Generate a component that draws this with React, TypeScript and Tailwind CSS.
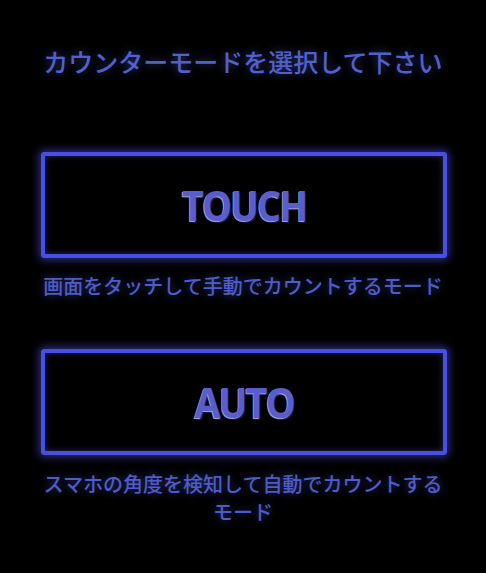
import React from "react";

const jp = "font-['Noto_Sans_CJK_JP','Noto_Sans',sans-serif]";

function ModeBox({ label }: { label: string }) {
  return (
    <div className="ml-[41px] flex h-[106px] w-[406px] items-center justify-center rounded-[3px] border-[4px] border-[#4a4fe4] shadow-[0_0_9px_2px_rgba(80,86,240,0.55),inset_0_0_6px_rgba(80,86,240,0.45)]">
      <span className="scale-x-[0.9] font-['Open_Sans',sans-serif] text-[42px] font-bold leading-none tracking-[-2px] text-[#5a5dcc] [text-shadow:-1px_1px_0_#9a9cc8,1px_2px_1px_#1a1a50]">
        {label}
      </span>
    </div>
  );
}

export default function App() {
  return (
    <div className={`min-h-[573px] w-[486px] bg-black ${jp}`}>
      <div className="pt-[45px] text-center text-[25px] font-medium leading-[32px] text-[#5260cc] [text-shadow:0_0_10px_rgba(90,100,220,0.55)]">
        カウンターモードを選択して下さい
      </div>
      <div className="mt-[75px]">
        <ModeBox label="TOUCH" />
      </div>
      <div className="mt-[14px] text-center text-[20px] font-medium leading-[28px] text-[#4f5bc8] [text-shadow:0_0_10px_rgba(90,100,220,0.55)]">
        画面をタッチして手動でカウントするモード
      </div>
      <div className="mt-[49px]">
        <ModeBox label="AUTO" />
      </div>
      <div className="mx-auto mt-[15px] w-[400px] text-center text-[20px] font-medium leading-[28px] text-[#4f5bc8] [text-shadow:0_0_10px_rgba(90,100,220,0.55)]">
        スマホの角度を検知して自動でカウントするモード
      </div>
    </div>
  );
}
